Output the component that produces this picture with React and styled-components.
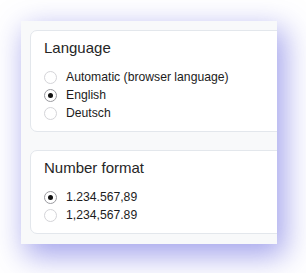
import React, { useState } from "react";
import styled, { createGlobalStyle } from "styled-components";

const Global = createGlobalStyle`
  html, body { margin: 0; padding: 0; background: #ffffff; }
  body { font-family: "Liberation Sans", Arial, Helvetica, sans-serif; }
`;

const Page = styled.div`
  padding: 21px 29px 29px 21px;
  min-height: 273px;
  box-sizing: border-box;
`;

const Panel = styled.div`
  width: 256px;
  height: 223px;
  box-sizing: border-box;
  padding: 9px 0 9px 9px;
  background: #f8f9fa;
  overflow: hidden;
  display: flex;
  flex-direction: column;
  gap: 18px;
  box-shadow: 6px 10px 28px 2px rgba(90, 90, 220, 0.55);
`;

const Card = styled.section`
  width: 270px;
  box-sizing: border-box;
  background: #ffffff;
  border: 1px solid #e3e7ec;
  border-radius: 7px;
  padding: 8px 13px 9px 13px;
`;

const Title = styled.h2`
  margin: 0 0 11px 0;
  font-size: 15px;
  line-height: 18px;
  font-weight: 400;
  color: #262626;
`;

const Options = styled.div`
  display: flex;
  flex-direction: column;
`;

const Option = styled.label`
  display: flex;
  align-items: center;
  gap: 9px;
  height: 18px;
  font-size: 12.2px;
  color: #1c1c1c;
  cursor: pointer;
`;

const Radio = styled.span`
  width: 13px;
  height: 13px;
  box-sizing: border-box;
  border-radius: 50%;
  background: #ffffff;
  border: 1px solid ${(p) => (p.$checked ? "#9a9a9f" : "#d4d4d8")};
  display: flex;
  align-items: center;
  justify-content: center;
  flex: none;
  &::after {
    content: "";
    width: 5px;
    height: 5px;
    border-radius: 50%;
    background: ${(p) => (p.$checked ? "#111111" : "transparent")};
  }
`;

function Group({ title, options, initial }) {
  const [value, setValue] = useState(initial);
  return (
    <Card>
      <Title>{title}</Title>
      <Options>
        {options.map((o) => (
          <Option key={o} onClick={() => setValue(o)}>
            <Radio $checked={value === o} />
            {o}
          </Option>
        ))}
      </Options>
    </Card>
  );
}

export default function App() {
  return (
    <>
      <Global />
      <Page>
        <Panel>
          <Group
            title="Language"
            options={["Automatic (browser language)", "English", "Deutsch"]}
            initial="English"
          />
          <Group
            title="Number format"
            options={["1.234.567,89", "1,234,567.89"]}
            initial="1.234.567,89"
          />
        </Panel>
      </Page>
    </>
  );
}
